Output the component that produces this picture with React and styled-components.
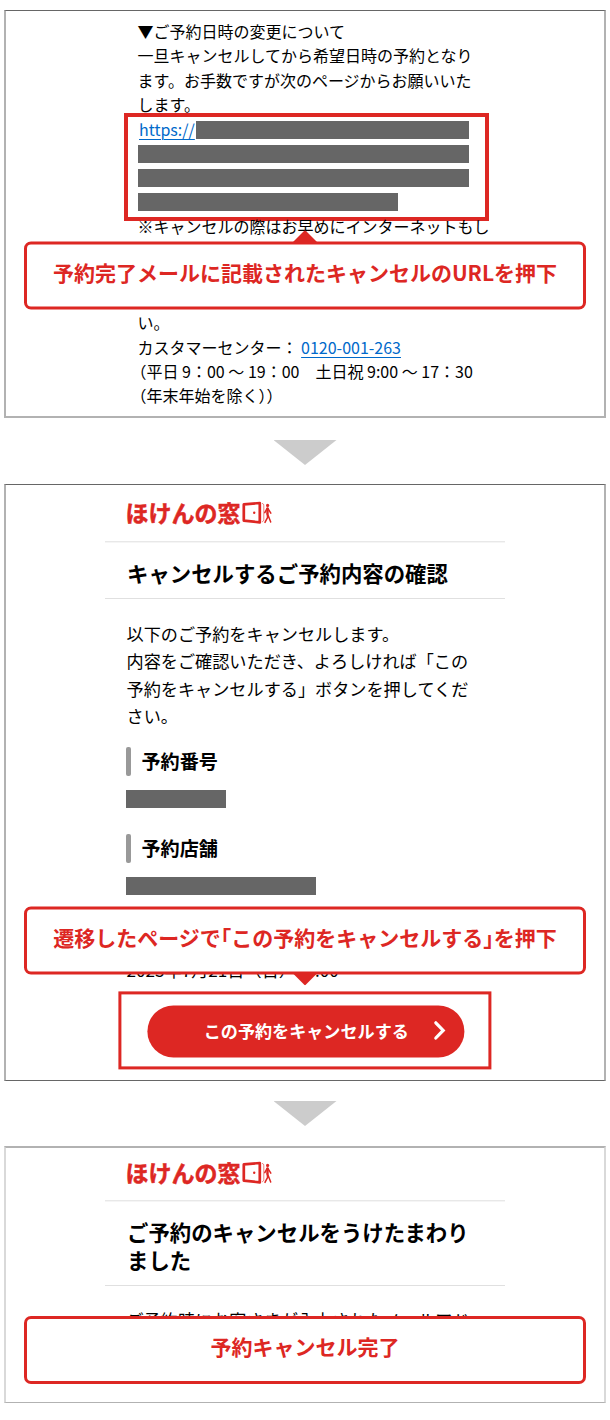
import React from 'react';
import styled, { createGlobalStyle } from 'styled-components';

const RED = '#dd2723';

const GlobalStyle = createGlobalStyle`
  * {
    box-sizing: border-box;
  }

  body {
    margin: 0;
    background: #fff;
    color: #000;
    font-family: "Noto Sans CJK JP", sans-serif;
  }

  h2, h3, p {
    margin: 0;
  }
`;

const Page = styled.main`
  display: flex;
  flex-direction: column;
  align-items: center;
  width: 610px;
  height: 1420px;
  padding-top: 10px;
  overflow: hidden;
`;

const Panel = styled.section`
  position: relative;
  width: 602px;
  height: ${(props) => props.$height}px;
  border: solid ${(props) => props.$side || '#b2b2b2'};
  border-width: ${(props) => props.$widths};
  border-top-color: ${(props) => props.$top || '#666'};
  border-bottom-color: ${(props) => props.$bottom || '#b2b2b2'};
`;

const StepArrow = styled.div`
  width: 63px;
  height: 25px;
  margin: ${(props) => props.$margin};
  background: #ccc;
  clip-path: polygon(0 0, 100% 0, 50% 100%);
`;

const Mail = styled.div`
  padding: 8px 0 0 131.5px;
  font-size: 16px;
  line-height: 24.3px;
  white-space: nowrap;
`;

const MailLine = styled.p`
  height: 24.3px;
  text-indent: ${(props) => (props.$hanging ? '-7px' : 0)};
`;

const MailGap = styled.div`
  height: 72.1px;
`;

const MailLink = styled.a`
  color: #0069ca;
  text-decoration: underline;
  text-decoration-thickness: 1px;
  text-underline-offset: 3px;
`;

const UrlFrame = styled.div`
  display: flex;
  flex-direction: column;
  gap: 6px;
  width: 365px;
  height: 108px;
  margin: -3.2px 0 -7px -13.5px;
  padding: 4px 0 0 10px;
  border: 4px solid ${RED};
`;

const UrlRow = styled.div`
  display: flex;
  height: 18px;
`;

const UrlHead = styled.span`
  width: 58px;
  padding-left: 1px;
  line-height: 16px;
`;

const Redacted = styled.div`
  width: ${(props) => props.$width}px;
  height: 18px;
  background: #666;
`;

const Screen = styled.div`
  width: 400px;
  margin-left: 99px;
`;

const LogoBar = styled.header`
  display: flex;
  align-items: flex-start;
  height: ${(props) => props.$height}px;
  padding: ${(props) => props.$top}px 0 0 20.5px;
  border-bottom: 1px solid #e8e8e8;
  box-shadow: 0 1px 0 #f5f5f5;
`;

const LogoText = styled.span`
  width: 116.5px;
  color: ${RED};
  font-size: 23px;
  font-weight: 700;
  line-height: 30px;
  white-space: nowrap;
  -webkit-text-stroke: 0.5px ${RED};
`;

const Door = styled.svg`
  margin-top: 4px;
`;

const Title = styled.h2`
  height: ${(props) => props.$height}px;
  padding: ${(props) => props.$top}px 0 0 22px;
  border-bottom: 1px solid #e0e0e0;
  font-size: 21.4px;
  font-weight: 700;
  line-height: 28.4px;
  white-space: nowrap;
`;

const Body = styled.p`
  padding: ${(props) => props.$top}px 0 0 21.5px;
  font-size: 17.15px;
  line-height: 27.4px;
  white-space: nowrap;
`;

const Item = styled.div`
  margin: ${(props) => props.$top}px 0 0 21px;
`;

const ItemName = styled.h3`
  display: flex;
  align-items: center;
  gap: 10.5px;
  height: 29px;
  margin-bottom: 14px;
  font-size: 19.1px;
  font-weight: 700;

  &::before {
    content: '';
    width: 5px;
    height: 29px;
    border-radius: 2px;
    background: #999;
  }
`;

const DateText = styled.p`
  margin: 61px 0 0 21.5px;
  font-size: 17.15px;
  line-height: 27px;
`;

const ButtonFrame = styled.div`
  width: 373px;
  height: 78px;
  margin: 8.4px 0 0 13px;
  padding: 11px 0 0 26.3px;
  border: 3px solid ${RED};
  transform: translate(0.4px, 0.4px);
`;

const CancelButton = styled.button`
  display: flex;
  align-items: center;
  justify-content: space-between;
  width: 316.5px;
  height: 51.5px;
  padding: 0 18px 1px 56px;
  border: 0;
  border-radius: 26px;
  background: ${RED};
  color: #fff;
  font-family: inherit;
  font-size: 17.1px;
  font-weight: 700;
`;

const Callout = styled.div`
  position: absolute;
  top: ${(props) => props.$top}px;
  left: 18px;
  display: flex;
  justify-content: center;
  width: 562px;
  height: 68px;
  padding-top: 11px;
  border: 3px solid ${RED};
  border-radius: 7px;
  background: #fff;
  color: ${RED};
  font-size: 21px;
  font-weight: 700;
  line-height: 32px;
  white-space: nowrap;
  transform: translateY(${(props) => props.$shift || 0}px);

  &::before {
    content: '';
    position: absolute;
    display: ${(props) => (props.$pointer ? 'block' : 'none')};
    left: 266px;
    ${(props) => (props.$pointer === 'up' ? 'top: -14.5px;' : 'bottom: -14px;')}
    width: 24px;
    height: 12px;
    background: ${RED};
    clip-path: ${(props) => (props.$pointer === 'up'
      ? 'polygon(50% 0, 100% 100%, 0 100%)'
      : 'polygon(0 0, 100% 0, 50% 100%)')};
  }
`;

const HalfBracket = styled.span`
  font-feature-settings: 'halt';
`;

function DoorIcon() {
  return (
    <Door width="30" height="24" viewBox="0 0 30 24" fill="none" stroke={RED}>
      <path d="M1.8 3.4 17.8 2V21.4L1.8 19.6Z" strokeWidth="2.7" strokeLinejoin="round" />
      <circle cx="12.2" cy="11.8" r="1.2" fill={RED} stroke="none" />
      <path d="M20 2.4c1.6.3 1.8 1 1.8 2.4v13.6c0 1.4-.4 2-1.8 2.4" strokeWidth="0.6" />
      <circle cx="25.6" cy="4.4" r="1.6" fill={RED} stroke="none" />
      <path d="M25.5 7.4v5.4" strokeWidth="2.4" strokeLinecap="round" />
      <path d="M25 7.6l-2.2 4M26 7.6l2.8 4.6M25.2 13l.4 3.4-2.6 5M25.8 13.4l2.9 7.6" strokeWidth="1.5" strokeLinecap="round" />
    </Door>
  );
}

function Chevron() {
  return (
    <svg width="13" height="20" viewBox="0 0 13 20" fill="none" stroke="#fff" strokeWidth="3.2">
      <path d="M2.4 2.4 9.8 10 2.4 17.6" strokeLinecap="round" />
    </svg>
  );
}

function Logo({ height, top }) {
  return (
    <LogoBar $height={height} $top={top}>
      <LogoText>ほけんの窓</LogoText>
      <DoorIcon />
    </LogoBar>
  );
}

function App() {
  return (
    <>
      <GlobalStyle />
      <Page>
        <Panel $height={408} $widths="1px 2px 2px">
          <Mail>
            <MailLine>▼ご予約日時の変更について</MailLine>
            <MailLine>一旦キャンセルしてから希望日時の予約となり</MailLine>
            <MailLine>ます。お手数ですが次のページからお願いいた</MailLine>
            <MailLine>します。</MailLine>
            <UrlFrame>
              <UrlRow>
                <UrlHead><MailLink>https://</MailLink></UrlHead>
                <Redacted $width={273} />
              </UrlRow>
              <Redacted $width={331} />
              <Redacted $width={331} />
              <Redacted $width={260} />
            </UrlFrame>
            <MailLine>※キャンセルの際はお早めにインターネットもし</MailLine>
            <MailGap />
            <MailLine>い。</MailLine>
            <MailLine>カスタマーセンター： <MailLink>0120-001-263</MailLink></MailLine>
            <MailLine $hanging>（平日 9：00 〜 19：00　土日祝 9:00 〜 17：30</MailLine>
            <MailLine $hanging>（年末年始を除く））</MailLine>
          </Mail>
          <Callout $top={230} $shift={0.5} $pointer="up">
            予約完了メールに記載されたキャンセルのURLを押下
          </Callout>
        </Panel>

        <StepArrow $margin="22px 0 19px" />

        <Panel $height={597} $widths="1px 2px" $bottom="#666">
          <Screen>
            <Logo height={57} top={12} />
            <Title $height={57} $top={17}>キャンセルするご予約内容の確認</Title>
            <Body $top={21}>
              以下のご予約をキャンセルします。<br />
              内容をご確認いただき、よろしければ「この<br />
              予約をキャンセルする」ボタンを押してくだ<br />
              さい。
            </Body>
            <Item $top={17}>
              <ItemName>予約番号</ItemName>
              <Redacted $width={100} />
            </Item>
            <Item $top={26}>
              <ItemName>予約店舗</ItemName>
              <Redacted $width={190} />
            </Item>
            <DateText>2023年7月21日（日）13:00</DateText>
            <ButtonFrame>
              <CancelButton type="button">
                この予約をキャンセルする
                <Chevron />
              </CancelButton>
            </ButtonFrame>
          </Screen>
          <Callout $top={421} $shift={0.5} $pointer="down">
            遷移したページで<HalfBracket>「</HalfBracket>この予約をキャンセルする<HalfBracket>」</HalfBracket>を押下
          </Callout>
        </Panel>

        <StepArrow $margin="20px 0" />

        <Panel $height={257} $widths="2px 2px 1px" $side="#d9d9d9" $top="#b2b2b2">
          <Screen>
            <Logo height={53} top={8.5} />
            <Title $height={85} $top={17}>
              ご予約のキャンセルをうけたまわり<br />
              ました
            </Title>
            <Body $top={20}>ご予約時にお客さまが入力されたメールアド</Body>
          </Screen>
          <Callout $top={168}>予約キャンセル完了</Callout>
        </Panel>
      </Page>
    </>
  );
}

export default App;
